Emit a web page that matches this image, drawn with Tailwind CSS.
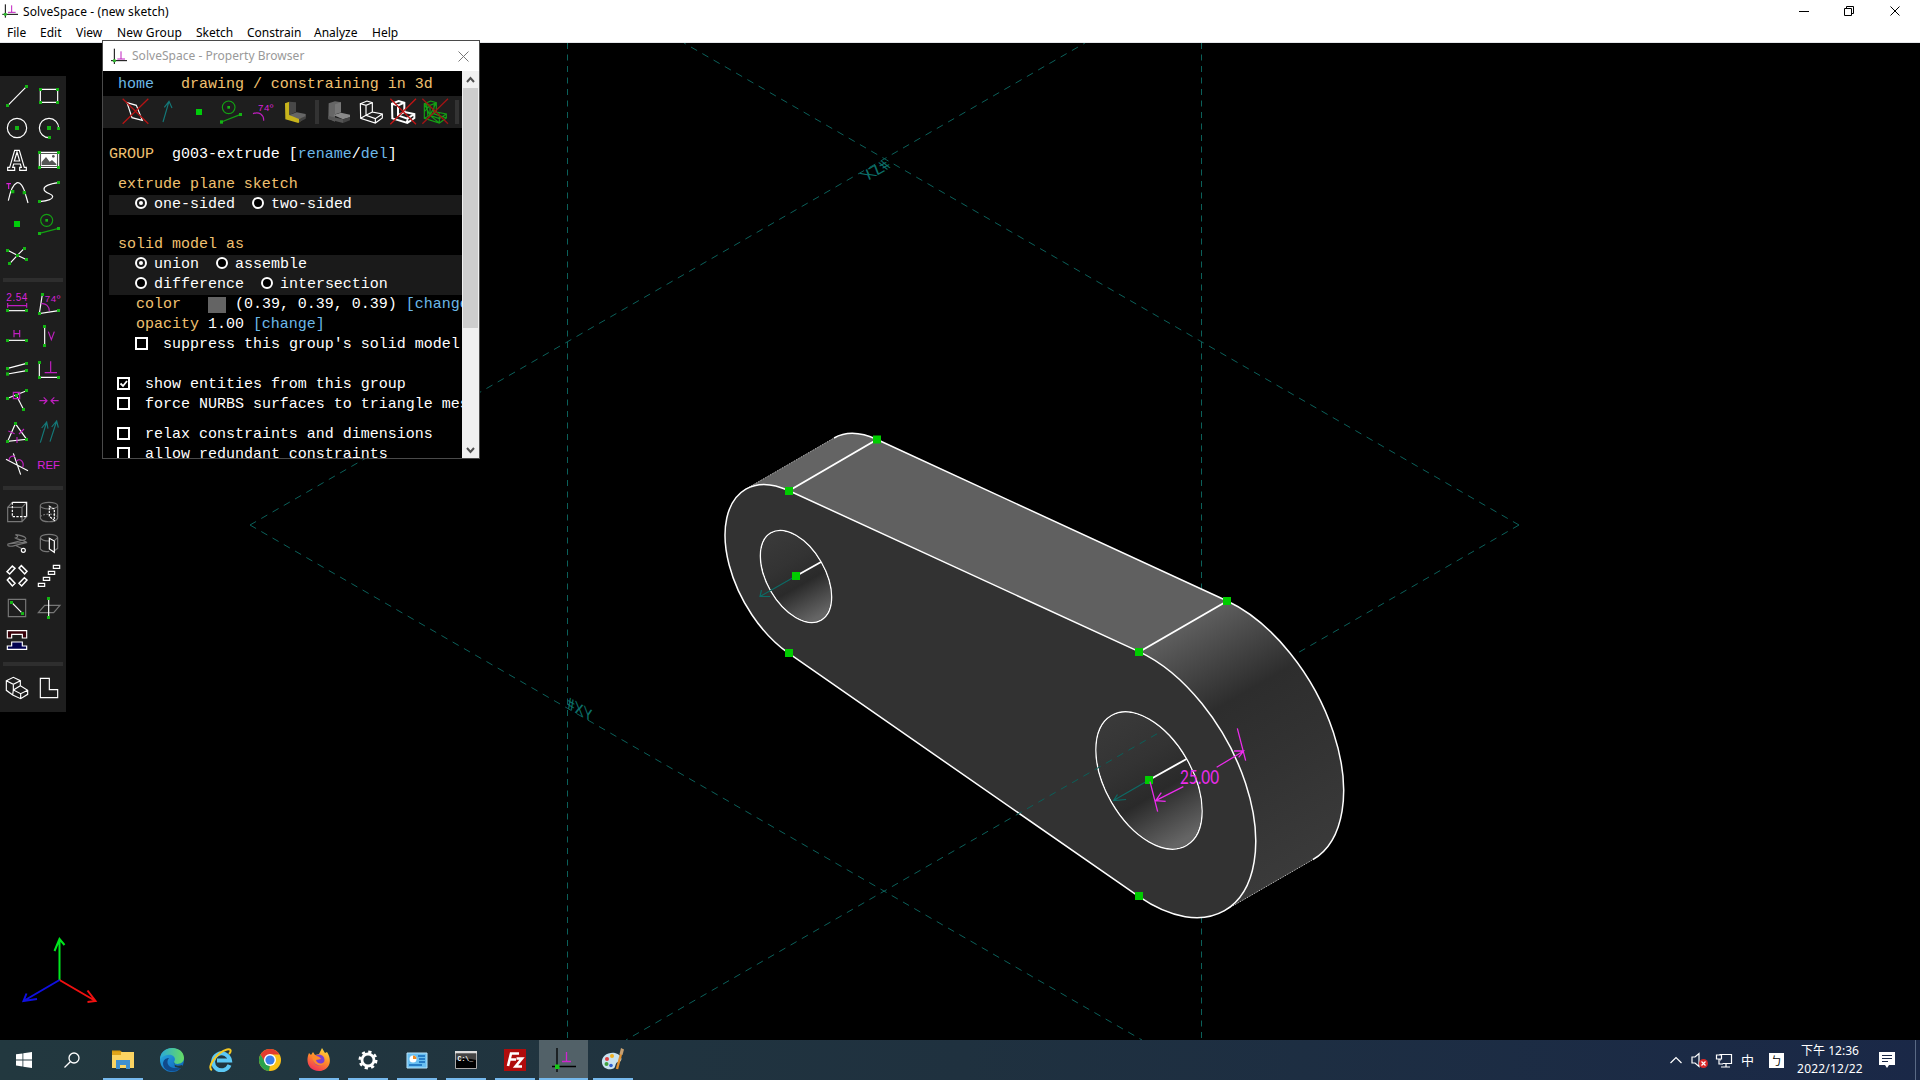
<!DOCTYPE html>
<html lang="en">
<head>
<meta charset="utf-8">
<title>SolveSpace - (new sketch)</title>
<script src="https://cdn.jsdelivr.net/npm/@tailwindcss/browser@4"></script>
</head>
<body class="w-[1920px] h-[1080px] overflow-hidden bg-black font-['Noto_Sans','Noto_Sans_CJK_TC',sans-serif]">
<svg class="absolute size-0">
  <defs>
    <marker id="g" markerUnits="userSpaceOnUse" markerWidth="10" markerHeight="10" refX="5" refY="5"><rect width="10" height="10" fill="#14b414"/></marker>
    <linearGradient id="sideR" gradientUnits="userSpaceOnUse" x1="1139" y1="652" x2="1272" y2="883"><stop offset="0" stop-color="#5e5e5e"/><stop offset=".33" stop-color="#2d2d2d"/><stop offset=".6" stop-color="#323232"/><stop offset="1" stop-color="#3a3a3a"/></linearGradient>
    <linearGradient id="holeR" gradientUnits="userSpaceOnUse" x1="1111" y1="715" x2="1187" y2="845"><stop offset="0" stop-color="#3a3a3a"/><stop offset=".35" stop-color="#333"/><stop offset=".6" stop-color="#2a2a2a"/><stop offset=".78" stop-color="#484848"/><stop offset=".96" stop-color="#656565"/></linearGradient>
    <linearGradient id="holeL" gradientUnits="userSpaceOnUse" x1="771" y1="532" x2="821" y2="620"><stop offset="0" stop-color="#3a3a3a"/><stop offset=".35" stop-color="#333"/><stop offset=".6" stop-color="#2a2a2a"/><stop offset=".78" stop-color="#484848"/><stop offset=".96" stop-color="#656565"/></linearGradient>
    <linearGradient id="edge" x1="0" y1="0" x2="1" y2="1"><stop offset="0" stop-color="#2bb5dd"/><stop offset=".5" stop-color="#1b84d0"/><stop offset="1" stop-color="#0d5fb0"/></linearGradient>
    <linearGradient id="edge2" x1="0" y1="0" x2="1" y2="0"><stop offset="0" stop-color="#2aa9d8"/><stop offset="1" stop-color="#66dc62"/></linearGradient>
    <linearGradient id="fox" x1=".8" y1="0" x2=".3" y2="1"><stop offset="0" stop-color="#ffde3c"/><stop offset=".5" stop-color="#ff8a2a"/><stop offset="1" stop-color="#f0305a"/></linearGradient>
  </defs>
</svg>

<div class="relative flex flex-col w-full h-full">
  <header class="h-[43px] bg-white border-b border-gray-200 text-black text-[12px] leading-[21px] flex-none">
    <div class="flex items-center h-[22px]">
      <svg class="w-[20px] h-[20px] flex-none" viewBox="0 6 60 60"><path d="M16 16V56M7 46H54" stroke="#000" stroke-width="3"/><path d="M35 19V40M24 40H47" stroke="#c020c0" stroke-width="3"/><circle cx="16" cy="46" r="5" fill="#2db42d"/></svg>
      <span class="ml-[3px] mt-[1px] tracking-[0.1px]">SolveSpace - (new sketch)</span>
      <div class="ml-auto flex items-center h-full pr-[19px]">
        <svg class="w-[102px] h-[14px]" viewBox="1799 3 102 14" fill="none" stroke="#000"><path d="M1799 10.5h10M1844.5 7.5h7v7h-7zM1846.500 7.500v-2h7v7h-2M1890.500 5.500l9 9m0-9l-9 9"/></svg>
      </div>
    </div>
    <nav class="flex pl-[7px] h-5 leading-[21px]"><span class="w-[33px]">File</span><span class="w-9">Edit</span><span class="w-[41px]">View</span><span class="w-[79px] tracking-[0.15px]">New Group</span><span class="w-[51px]">Sketch</span><span class="w-[67px]">Constrain</span><span class="w-[58px]">Analyze</span><span>Help</span></nav>
  </header>

  <main class="relative h-[997px] flex-none bg-black">
    <svg class="block w-[1920px] h-[997px]" viewBox="0 43 1920 997" fill="none">
      <g stroke="#0b605a" stroke-width="1" stroke-dasharray="6 5.5">
        <path d="M567.500 43V1040M1201.500 43V1040"/>
        <path stroke-dasharray="7 6" d="M250 525L1085 43M250 525L1142 1040M1519 525L684 43M1519 525L1295 654.500"/>
      </g>
      <g fill="#0c6f69" font-family="Lato" font-size="17">
        <text transform="matrix(.866 .5 0 1 567 708)" textLength="29" lengthAdjust="spacingAndGlyphs">#XY</text>
        <text transform="matrix(-.866 .5 -.866 -.5 883 160)" textLength="28" lengthAdjust="spacingAndGlyphs">#ZX</text>
      </g>
      <path fill="#646464" d="M745.800 489.100L834 438A100.400 58 60 0 1 877 439.500L788.500 491Z"/>
      <path fill="#606060" d="M788.500 491L877 439.500L1227 601L1139 652Z"/>
      <path fill="url(#sideR)" d="M1139 652L1227.300 601A150.900 87.100 60 0 1 1312.800 859.700L1224.500 910.700Z"/>
      <path stroke="#ccc" stroke-width="1" stroke-dasharray="1 1" d="M745.800 489.100L834 438M1224.500 910.700L1312.800 859.700"/>
      <path fill="#323232" stroke="#fff" stroke-width="1.500" d="M788.500 490.500L1139 651.600A150.900 87.100 60 0 1 1224.500 910.700A150.900 87.100 60 0 1 1139 896.700L788.500 653.200A100.400 58 60 0 1 745.800 489.100A100.400 58 60 0 1 788.500 490.500Z"/>
      <path stroke="#fff" stroke-width="1.500" d="M834 438A100.400 58 60 0 1 877 439.500L1227.300 601A150.900 87.100 60 0 1 1312.800 859.700"/>
      <path stroke="#fff" stroke-width="1.900" d="M788.500 491L877 439.500M1139 652L1227.300 601"/>
      <ellipse cx="796" cy="576.500" rx="50.300" ry="29" transform="rotate(60 796 576.500)" stroke="#fff" stroke-width="1.500"/>
      <ellipse cx="1149" cy="780.500" rx="75" ry="43.300" transform="rotate(60 1149 780.500)" stroke="#fff" stroke-width="1.500"/>
      <path fill="url(#holeL)" d="M771.200 533.500A49.500 28.300 60 0 1 820.800 619.500A49.500 28.300 60 0 1 771.200 533.500Z"/>
      <path fill="url(#holeR)" d="M1111.800 716.100A74.200 42.600 60 0 1 1186.200 844.900A74.200 42.600 60 0 1 1111.800 716.100Z"/>
      <path stroke="#0b605a" stroke-dasharray="7 6" d="M1157 733.800L626 1040"/>
      <path stroke="#fff" stroke-width="1.900" d="M796 576l25-14M1149 780l37.500-21"/>
      <path stroke="#0c6b66" stroke-width="1.200" d="M796 576L760 596.500M761.500 590L760 596.500L770 596.500M1149 780L1113.500 800.500M1117.500 794.500L1113.500 800.500L1126 799.500"/>
      <g fill="#0c0"><path d="M785 487h8v8h-8zM873 435.500h8v8h-8zM785 649h8v8h-8zM792 572h8v8h-8zM1145 776h8v8h-8zM1135 648h8v8h-8zM1223 597h8v8h-8zM1135 892h8v8h-8z"/></g>
      <g transform="translate(1000 560) scale(.33333)" stroke="#ec2cec" stroke-width="3.800">
        <path d="M450 665L473 755M550 680L467 722M484 698L467 722L497 724M712 505L737 602M650 622L731 573M702 573L731 573L716 592"/>
      </g>
      <text x="1180" y="784" fill="#ec2cec" font-family="Lato" font-size="18.500" textLength="39" lengthAdjust="spacingAndGlyphs">25.00</text>
      <g stroke-width="2"><path stroke="#00e61e" d="M59.500 980V939M54.500 951L59.500 939L64.500 945"/><path stroke="#f01010" d="M59.500 980L95.500 1001M87.500 990.500L95.500 1001L87.500 1002"/><path stroke="#1010e0" d="M59.500 980L23.500 1001M26.500 993.500L23.500 1001L37 999"/></g>
    </svg>

    <aside class="absolute left-0 top-[33px] w-[66px] h-[636px] bg-[#1e1e1e] px-px py-1 flex flex-col">
      <div class="grid grid-cols-2 [&>svg]:size-8 [&>svg]:fill-none [&>svg]:stroke-white [&>svg]:stroke-[3.5px]">
        <svg viewBox="3 30 96 96"><path d="M23 107L80 49" marker-start="url(#g)" marker-end="url(#g)"/></svg>
        <svg viewBox="99 30 96 96"><path d="M121 58H173V97H121Z" marker-start="url(#g)" marker-mid="url(#g)"/></svg>
        <svg viewBox="3 126 96 96"><circle cx="51" cy="174" r="29"/><path d="M45 168h12v12h-12z" fill="#14b414" stroke="none"/></svg>
        <svg viewBox="99 126 96 96"><path d="M148 203A29 29 0 1 1 176 175" marker-start="url(#g)" marker-end="url(#g)"/><path d="M141 168h12v12h-12z" fill="#14b414" stroke="none"/></svg>
        <svg viewBox="3 222 96 96"><path d="M23 301V292H29L44 241H58L73 292H79V301H59V292H64L61 282H41L38 292H44V301ZM43 273H59L51 246Z"/></svg>
        <svg viewBox="99 222 96 96"><path d="M118 247H176V292H118Z" marker-start="url(#g)" marker-mid="url(#g)"/><path d="M124 253h46v33h-46z" fill="#fff"/><path d="M125 285V276L138 261L149 275L156 270L169 282V285Z" fill="#555" stroke="none"/><circle cx="160" cy="259" r="4" fill="#555" stroke="none"/></svg>
        <svg viewBox="3 318 96 96"><path d="M25 392C38 330 62 316 78 378L84 399"/><path d="M33 360h10v10h-10zM68 363h10v10h-10z" fill="#14b414" stroke="none"/><path d="M19 341H33M26 341V357" stroke="#d822d8"/></svg>
        <svg viewBox="99 318 96 96"><path d="M118 395C136 393 158 390 158 380C158 370 132 371 132 357C132 345 155 341 176 338" marker-start="url(#g)" marker-end="url(#g)"/></svg>
        <svg viewBox="3 414 96 96"><path d="M42 453h18v18h-18z" fill="#00cc0a" stroke="none"/></svg>
        <svg viewBox="99 414 96 96"><g stroke="#14a014"><circle cx="140" cy="451" r="18"/><path d="M118 490L176 475" marker-start="url(#g)" marker-end="url(#g)"/><path d="M136 447h8v8h-8z" fill="#14b414" stroke="none"/></g></svg>
        <svg viewBox="3 510 96 96"><path d="M23 541L52 556L80 569M73 535L52 556L29 581" marker-start="url(#g)" marker-mid="url(#g)" marker-end="url(#g)"/></svg>
      </div>
      <div class="h-4 flex items-center px-0.5"><i class="h-1 w-full bg-[#2e2e2e]"></i></div>
      <div class="grid grid-cols-2 [&>svg]:size-8 [&>svg]:fill-none [&>svg]:stroke-white [&>svg]:stroke-[3.5px]">
        <svg viewBox="3 39 96 96"><path d="M23 107H80" marker-start="url(#g)" marker-end="url(#g)"/><path d="M23 92H80M23 84V98M80 84V98" stroke="#c01fc0"/><text x="19" y="79" font-family="Liberation Sans" font-size="30" textLength="63" fill="#d822d8" stroke="none">2.54</text></svg>
        <svg viewBox="99 39 96 96"><path d="M127 58L118 116L176 107" marker-start="url(#g)" marker-mid="url(#g)" marker-end="url(#g)"/><path d="M124 86C138 84 148 94 148 108" stroke="#c01fc0"/><text x="134" y="80" font-family="Liberation Sans" font-size="29" textLength="47" fill="#d822d8" stroke="none">74º</text></svg>
        <svg viewBox="3 135 96 96"><path d="M23 196H80" marker-start="url(#g)" marker-end="url(#g)"/><path d="M42 165V187M59 165V187M42 176H59" stroke="#c01fc0"/></svg>
        <svg viewBox="99 135 96 96"><path d="M134 154V212" marker-start="url(#g)" marker-end="url(#g)"/><path d="M145 170L154 194L163 170" stroke="#c01fc0"/></svg>
        <svg viewBox="3 231 96 96"><path d="M23 280L80 265" marker-start="url(#g)" marker-end="url(#g)"/><path d="M23 297L80 287" marker-start="url(#g)" marker-end="url(#g)"/></svg>
        <svg viewBox="99 231 96 96"><path d="M118 262V307H176" marker-start="url(#g)" marker-mid="url(#g)" marker-end="url(#g)"/><path d="M152 259V293M134 293H171" stroke="#c01fc0"/></svg>
        <svg viewBox="3 327 96 96"><path d="M23 370L80 347" marker-start="url(#g)" marker-end="url(#g)"/><path d="M49 361L71 404" marker-start="url(#g)" marker-end="url(#g)"/><path d="M40 352h19v19h-19z" stroke="#c01fc0"/></svg>
        <svg viewBox="99 327 96 96"><path d="M118 377H141M131 367L141 377L131 387M176 377H153M163 367L153 377L163 387" stroke="#c01fc0"/></svg>
        <svg viewBox="3 423 96 96"><path d="M46 446L80 493L23 499L46 446" marker-start="url(#g)" marker-mid="url(#g)"/><path d="M25 468L44 476M72 462L57 477M51 486V504" stroke="#c01fc0"/></svg>
        <svg viewBox="99 423 96 96"><path d="M121 503L140 441M125 459L140 441L144 461M150 500L170 438M155 456L170 438L175 458" stroke="#147878"/></svg>
        <svg viewBox="3 519 96 96"><path d="M18 553L84 587M40 535L62 599"/><path d="M27 556C27 545 38 540 44 546M50 558C60 547 74 562 68 577" stroke="#c01fc0"/></svg>
        <svg viewBox="99 519 96 96"><text x="112" y="582" font-family="Liberation Sans" font-size="34" textLength="68" lengthAdjust="spacingAndGlyphs" fill="#d822d8" stroke="none">REF</text></svg>
      </div>
      <div class="h-4 flex items-center px-0.5"><i class="h-1 w-full bg-[#2e2e2e]"></i></div>
      <div class="grid grid-cols-2 [&>svg]:size-8 [&>svg]:fill-none [&>svg]:stroke-white [&>svg]:stroke-[3.5px]">
        <svg viewBox="3 48 96 96"><path d="M23 82H66V125H23ZM23 82L37 67M66 125L80 110M66 82L80 67" stroke="#777"/><path d="M37 67H80V110"/><path d="M37 67V110H80" stroke-dasharray="7 4"/></svg>
        <svg viewBox="99 48 96 96"><g stroke="#777"><ellipse cx="147" cy="77" rx="26" ry="10"/><path d="M121 77V114C125 129 169 129 173 114V77"/><path d="M121 110C130 100 164 100 173 110" stroke-dasharray="6 4"/></g><path d="M148 79L163 87V121L148 109Z" stroke-dasharray="7 3"/></svg>
        <svg viewBox="3 144 96 96"><path d="M46 164C80 168 84 178 70 180L24 192C20 200 34 200 46 196L80 188C76 180 54 180 46 174Q60 170 46 164M24 192L80 186M46 196L66 206" stroke="#777"/><circle cx="70" cy="211" r="6"/></svg>
        <svg viewBox="99 144 96 96"><g stroke="#777"><path d="M121 173C125 160 169 160 173 173V205L163 212M121 173C124 180 134 183 148 183M121 173V207C126 214 136 216 148 214M173 173L163 182"/></g><path d="M148 175L163 183V217L148 207Z"/></svg>
        <svg viewBox="3 240 96 96"><path stroke-width="4.500" d="M21 275L37 258L45 265L29 282ZM57 264L64 257L81 274L74 282ZM22 300L29 293L45 310L37 318ZM57 310L73 293L81 300L65 318Z"/></svg>
        <svg viewBox="99 240 96 96"><path d="M160 256h19v9h-19zM145 274h19v9h-19zM130 292h19v9h-19zM115 310h19v9h-19z"/></svg>
        <svg viewBox="3 336 96 96"><path d="M25 358h52v52h-52z" stroke="#777"/><path d="M35 367L68 401" marker-start="url(#g)" marker-end="url(#g)"/></svg>
        <svg viewBox="99 336 96 96"><path d="M115 398L134 376H180L161 398Z" stroke="#777"/><path d="M146 355V412" marker-start="url(#g)" marker-end="url(#g)"/></svg>
        <svg viewBox="3 432 96 96"><path d="M22 452H80V474H67V463H35V474H22Z" fill="#3a0008"/><path d="M22 508V498H35V486H67V498H80V508Z" fill="#000050"/></svg>
      </div>
      <div class="h-4 flex items-center px-0.5"><i class="h-1 w-full bg-[#2e2e2e]"></i></div>
      <div class="grid grid-cols-2 [&>svg]:size-8 [&>svg]:fill-none [&>svg]:stroke-white [&>svg]:stroke-[3.5px]">
        <svg viewBox="3 576 96 96"><path d="M19 602L40 592L61 602V617L83 631V643L62 656L38 645L19 631ZM19 602L40 613L61 602M40 613V630L62 641L83 631M62 641V656M40 630L61 617M38 645L40 630" /></svg>
        <svg viewBox="99 576 96 96"><path d="M121 595H148V629H173V653H121Z"/></svg>
      </div>
    </aside>

    <section class="absolute left-[102px] top-[-3px] w-[378px] h-[419px] bg-black border border-[#4a4a4a] flex flex-col">
      <div class="h-[30px] flex-none bg-white flex items-center text-[12px] text-[#999] pl-2 pr-[10px]">
        <svg class="w-4 h-4" viewBox="333 140 48 48"><path d="M343 142V188M333 178H381" stroke="#000" stroke-width="3"/><path d="M363 150V173M352 173H375" stroke="#c020c0" stroke-width="3"/><circle cx="343" cy="178" r="5" fill="#2db42d"/></svg>
        <span class="ml-[5px] tracking-[0.03px]">SolveSpace - Property Browser</span>
        <svg class="ml-auto w-[11px] h-[11px]" viewBox="0 0 11 11" stroke="#777" fill="none"><path d="M.5.5l10 10m0-10l-10 10"/></svg>
      </div>
      <div class="flex flex-1 min-h-0">
        <div class="w-[359px] overflow-hidden text-[15px] leading-5 text-white font-['Liberation_Mono',monospace] tracking-[-0.01px]">
          <div class="h-[25px] pl-[15px] pt-1 whitespace-pre"><span class="text-[#6cb8e8]">home</span>   <span class="text-[#f0c070]">drawing / constraining in 3d</span></div>
          <div class="h-8 bg-[#1e1e1e] pl-4 flex items-center [&>svg]:size-8 [&>svg]:flex-none [&>svg]:fill-none [&>svg]:stroke-[3.5px]">
            <svg viewBox="357 288 96 96" stroke="#fff"><path d="M381 308L409 316L427 361L396 353Z"/><path d="M368 296L445 371M445 296L368 371" stroke="#b41414" stroke-width="4"/></svg>
            <svg viewBox="453 288 96 96" stroke="#147878"><path d="M489 366L507 304M493 322L507 304L516 324"/></svg>
            <svg viewBox="549 288 96 96"><path d="M588 327h18v18h-18z" fill="#00cc0a"/></svg>
            <svg viewBox="645 288 96 96" stroke="#14a014"><circle cx="686" cy="322" r="19"/><path d="M664 366L722 343" marker-start="url(#g)" marker-end="url(#g)"/><path d="M682 318h8v8h-8z" fill="#14b414" stroke="none"/></svg>
            <svg viewBox="741 288 96 96" stroke="#c01fc0"><path d="M759 341C777 334 792 344 791 362"/><text x="774" y="332" font-family="Liberation Sans" font-size="29" textLength="46" fill="#d822d8" stroke="none">74º</text></svg>
            <svg viewBox="837 288 96 96"><path d="M855 310L868 305V345L917 350L895 369L856 358Z" fill="#c8b41c"/><path d="M868 305L888 307V336L868 345Z" fill="#484848"/><path d="M868 345L890 337L917 342V352L897 357Z" fill="#666"/><path d="M897 357L917 348V356L897 367Z" fill="#444"/></svg>
            <i class="w-3 h-6 border-x-4 border-[#1e1e1e] bg-[#333] flex-none"></i>
            <svg viewBox="969 288 96 96"><path d="M986 310L1005 304L1023 307V337L1005 342V365L985 356Z" fill="#666"/><path d="M1005 313L1023 307V337L1005 343Z" fill="#777"/><path d="M1000 345L1023 338L1050 344V352L1029 358Z" fill="#8a8a8a"/><path d="M985 348L1029 358V369L985 358Z" fill="#555"/><path d="M1029 358L1050 351V361L1029 369Z" fill="#444"/></svg>
            <svg viewBox="1065 288 96 96" stroke="#fff"><path d="M1081 311L1101 303L1117 308V336L1147 342V354L1126 369L1082 355ZM1081 311L1098 316L1117 308M1098 316V346L1126 356L1147 342M1126 356V369M1098 346L1117 336M1082 355L1098 346"/></svg>
            <svg viewBox="1161 288 96 96" stroke="#fff" ><path stroke-width="6" d="M1176 311L1196 303L1213 308V336L1243 342V354L1222 369L1177 355ZM1176 311L1194 316L1213 308M1194 316V346L1222 356L1243 342M1222 356V369M1194 346L1213 336"/><path d="M1171 296L1248 373M1248 296L1171 373" stroke="#c01414" stroke-width="4"/></svg>
            <svg viewBox="1257 288 96 96" stroke="#14a014"><path d="M1273 311L1292 303L1309 308V336L1339 342V354L1318 369L1273 355ZM1273 311L1290 316L1309 308M1290 316V346L1318 356L1339 342M1318 356V369M1290 346L1309 336M1273 311L1290 346L1273 355M1273 335L1290 316M1290 346L1309 308M1290 346L1318 369M1300 341L1339 354M1318 356L1317 338M1280 314L1284 350M1303 310L1300 341"/><path d="M1267 296L1344 371M1344 296L1267 371" stroke="#a01414" stroke-width="4"/></svg>
            <i class="w-3 h-6 border-x-4 border-[#1e1e1e] bg-[#333] flex-none"></i>
          </div>
          <div class="pl-1.5 pt-[17px] [&>p]:whitespace-pre [&>p]:h-5 [&_b]:font-normal [&_b]:text-[#f0c070] [&_a]:text-[#6cb8e8] [&_i]:inline-block [&_i]:bg-black [&_i]:border-2 [&_i]:border-white [&_i]:flex-none">
            <p><b>GROUP</b>  g003-extrude [<a>rename</a>/<a>del</a>]</p>
            <p class="mt-2.5"><b> extrude plane sketch</b></p>
            <p class="bg-[#1a1a1a] flex"><i class="ml-[26px] mt-[2px] mr-[7px] size-3 rounded-full p-0.5 bg-white! bg-clip-content"></i>one-sided<i class="ml-[17px] mt-[2px] mr-[7px] size-3 rounded-full"></i>two-sided</p>
            <p class="mt-5"><b> solid model as</b></p>
            <p class="bg-[#1a1a1a] flex"><i class="ml-[26px] mt-[2px] mr-[7px] size-3 rounded-full p-0.5 bg-white! bg-clip-content"></i>union<i class="ml-[17px] mt-[2px] mr-[7px] size-3 rounded-full"></i>assemble</p>
            <p class="bg-[#1a1a1a] flex"><i class="ml-[26px] mt-[2px] mr-[7px] size-3 rounded-full"></i>difference<i class="ml-[17px] mt-[2px] mr-[7px] size-3 rounded-full"></i>intersection</p>
            <p class="flex"><b>   color</b><span class="w-[18px] h-4 mt-[2px] ml-[27px] flex-none bg-[#646464]"></span><span> (0.39, 0.39, 0.39) <a>[change]</a></span></p>
            <p><b>   opacity</b> 1.00 <a>[change]</a></p>
            <p class="flex"><i class="ml-[26px] mt-[2px] mr-[15px] size-[13px]"></i>suppress this group's solid model</p>
            <p class="flex mt-5"><i class="ml-2 mt-[2px] mr-[15px] size-[13px] relative"><svg class="absolute inset-0" viewBox="0 0 9 9" fill="none" stroke="#fff" stroke-width="1.800"><path d="M1.500 4.500L4 7L8 2"/></svg></i>show entities from this group</p>
            <p class="flex"><i class="ml-2 mt-[2px] mr-[15px] size-[13px]"></i>force NURBS surfaces to triangle mesh</p>
            <p class="flex mt-2.5"><i class="ml-2 mt-[2px] mr-[15px] size-[13px]"></i>relax constraints and dimensions</p>
            <p class="flex"><i class="ml-2 mt-[2px] mr-[15px] size-[13px]"></i>allow redundant constraints</p>
          </div>
        </div>
        <div class="w-[17px] bg-[#f0f0f0] flex flex-col items-center justify-between">
          <div class="w-full flex flex-col items-center"><svg class="w-[9px] h-[17px]" viewBox="0 0 9 17" fill="none" stroke="#505050" stroke-width="2"><path d="M1 11l3.500-4L8 11"/></svg><div class="w-[15px] h-60 bg-[#cdcdcd]"></div></div>
          <svg class="w-[9px] h-[17px]" viewBox="0 0 9 17" fill="none" stroke="#505050" stroke-width="2"><path d="M1 7l3.500 4L8 7"/></svg>
        </div>
      </div>
    </section>
  </main>

  <footer class="h-10 flex-none flex bg-linear-to-r from-[#22383f] via-[#1f313f] to-[#1a2847] text-white">
    <div class="w-12 flex items-center justify-center"><svg class="size-4" viewBox="0 0 16 16" fill="#fff"><path d="M0 2.300L6.500 1.400V7.500H0zM7.300 1.300L16 0V7.500H7.300zM0 8.400H6.500V14.500L0 13.600zM7.300 8.400H16V16L7.300 14.700z"/></svg></div>
    <div class="w-12 flex items-center justify-center mr-[2px]"><svg class="size-4" viewBox="0 0 16 16" fill="none" stroke="#fff" stroke-width="1.300"><circle cx="10" cy="6" r="5"/><path d="M6.300 9.800L.5 15.500"/></svg></div>
    <div class="flex [&>div]:w-[49px] [&>div]:flex [&>div]:flex-col [&>div]:items-center [&>div]:justify-between [&_svg]:size-6 [&_svg]:mt-2 [&_u]:h-0.5 [&_u]:w-10 [&_u]:bg-[#76b9ed]">
      <div><svg viewBox="0 0 24 24"><path d="M1 4V2.500h8L11 4z" fill="#d89a10"/><path d="M1 4h22v16H1z" fill="#fcd462"/><path d="M1 4h9v3H1z" fill="#e0a41a"/><path d="M5 21v-9h14v9h-4v-4H9v4z" fill="#3f8fd0"/></svg><u></u></div>
      <div><svg viewBox="0 0 24 24"><circle cx="12" cy="12" r="12" fill="url(#edge)"/><path d="M0 11C1-4 24-3 24 10C24 17 14 17 14 14C18 8 8 3 0 11z" fill="url(#edge2)"/><path d="M9 10C5 15 9 23 22 19C17 25 4 25 3 16C3 12 6 10 9 10z" fill="#114a8b"/><path d="M14 14C13 17 18 19 22 17L24 21L15 19z" fill="#22383f"/></svg></div>
      <div><svg viewBox="0 0 24 24" fill="none"><path d="M20.500 17A8.500 8.500 0 1 1 21 12.500H8" stroke="#5cc9f5" stroke-width="4"/><path d="M3 22C-3 20 8 4 18 1.500C23 .5 22 4 20 6" stroke="#f5c822" stroke-width="2"/></svg></div>
      <div><svg viewBox="0 0 24 24"><circle cx="12" cy="12" r="11" fill="#fbc116"/><path d="M2.500 6.500A11 11 0 0 1 21.500 6.500H12L7 15z" fill="#e33b2e"/><path d="M2.500 6.500L7.500 15L12 17L11 23A11 11 0 0 1 2.500 6.500z" fill="#2ba24c"/><circle cx="12" cy="12" r="6" fill="#fff"/><circle cx="12" cy="12" r="4.600" fill="#3b7de8"/></svg></div>
      <div><svg viewBox="0 0 24 24"><path d="M2 5L4 7L6 4L8 7L12 6L15 0L18 5L20 4C27 15 20 23 12 23C2 23-2 14 2 5z" fill="url(#fox)"/><circle cx="12" cy="12" r="5.500" fill="#7b3fd0"/><path d="M5 8C10 7 13 9 14 11L9 12C10 16 15 17 18 13C17 20 6 19 5 8z" fill="#ff8a2a"/></svg><u></u></div>
      <div><svg viewBox="0 0 24 24" fill="none" stroke="#fff"><circle cx="12" cy="12" r="6" stroke-width="2.800"/><circle cx="12" cy="12" r="8.200" stroke-width="2.600" stroke-dasharray="3.200 3.240"/></svg><u></u></div>
      <div><svg viewBox="0 0 24 24"><path d="M2 5h20v15H2z" fill="#69bff0" stroke="#b7e3fb"/><circle cx="8" cy="11" r="3.500" fill="#fff"/><path d="M8 11V7.500A3.500 3.500 0 0 1 11.500 11z" fill="#f08a20"/><path d="M13 8h7M14 11h6M14 14h6M4 17h13" stroke="#1268b8" stroke-width="1.500"/></svg><u></u></div>
      <div><svg viewBox="0 0 24 24"><path d="M1.500 3.500h21v17h-21z" fill="#000" stroke="#aaa"/><path d="M1 3h22v2.500H1z" fill="#ddd"/><path d="M2 6h20v6Q12 9 2 12z" fill="#444"/><text x="3.500" y="13" font-family="Liberation Mono" font-weight="700" font-size="6.500" fill="#fff">C:\_</text></svg><u></u></div>
      <div><svg viewBox="0 0 24 24"><path d="M1 1h22v22H1z" fill="#b00c0c"/><path d="M5 18L8 5.500H16M7 11.500H13M13.500 10.500H19L12.500 18.500H19" fill="none" stroke="#fff" stroke-width="2.600"/></svg><u></u></div>
      <div class="bg-[#526168]"><svg viewBox="0 0 24 24" fill="none"><path d="M5 0V24M0 18.500H24" stroke="#000" stroke-width="1.300"/><path d="M14.500 4V13.500M10 13.500H19" stroke="#d024d0" stroke-width="1.300"/><path d="M3 16.500h4.500v4.500H3z" fill="#18c818"/></svg><u class="w-full!"></u></div>
      <div><svg viewBox="0 0 24 24"><path d="M1 15C0 8 7 4 14 5C22 7 22 14 17 14C13 15 16 20 11 21C6 22 2 20 1 15z" fill="#c8e2f0"/><circle cx="6" cy="11" r="2" fill="#e04040"/><circle cx="11" cy="8" r="2" fill="#f0b020"/><circle cx="5.500" cy="16" r="2" fill="#40a040"/><circle cx="10" cy="17.500" r="1.800" fill="#3060d0"/><path d="M16 21L20 6" stroke="#e09030" stroke-width="2.400"/><path d="M18.500 6L20 0L23 1.500L21.500 7z" fill="#c8a070"/></svg><u></u></div>
    </div>
    <div class="ml-auto flex items-center h-full">
      <svg class="w-[105px] h-10" viewBox="1670 1040 105 40" fill="none" stroke="#fff" stroke-width="1.200"><path d="M1670.500 1063l5.500-5.500 5.500 5.500M1692 1057h3l4-3.500v13l-4-3.500h-3z"/><circle cx="1703.500" cy="1063.500" r="4.500" fill="#d82828" stroke="none"/><path d="M1701.500 1061.500l4 4m0-4l-4 4"/><path d="M1720 1054.500h11.500v9h-11.500zM1726 1064v3.500M1721 1067h9"/><path d="M1716.500 1055h5v4h-5zM1719 1059v5h4" fill="#1a2847"/><text x="1741" y="1064.500" font-size="13" font-family="Noto Sans CJK TC" fill="#fff" stroke="none">中</text></svg>
      <div class="w-[15px] h-[15px] -ml-[6px] bg-white text-black text-[11px] leading-[15px] text-center font-['Noto_Sans_CJK_TC',sans-serif]">ㄅ</div>
      <div class="w-[80px] ml-[6px] text-center text-[12px] leading-[18px] font-['Noto_Sans','Noto_Sans_CJK_TC',sans-serif]"><div class="whitespace-nowrap">下午 12:36</div><div class="tracking-[0.2px]">2022/12/22</div></div>
      <svg class="w-4 h-4 ml-[9px]" viewBox="0 0 16 16"><path d="M0 0h16v13h-6l-2 3-2-3H0z" fill="#fff"/><path d="M3 3.500h10M3 6.500h10M3 9.500h6" stroke="#1a2847"/></svg>
      <i class="w-px h-full bg-[#5a6a85] ml-5 mr-1"></i>
    </div>
  </footer>
</div>
</body>
</html>
